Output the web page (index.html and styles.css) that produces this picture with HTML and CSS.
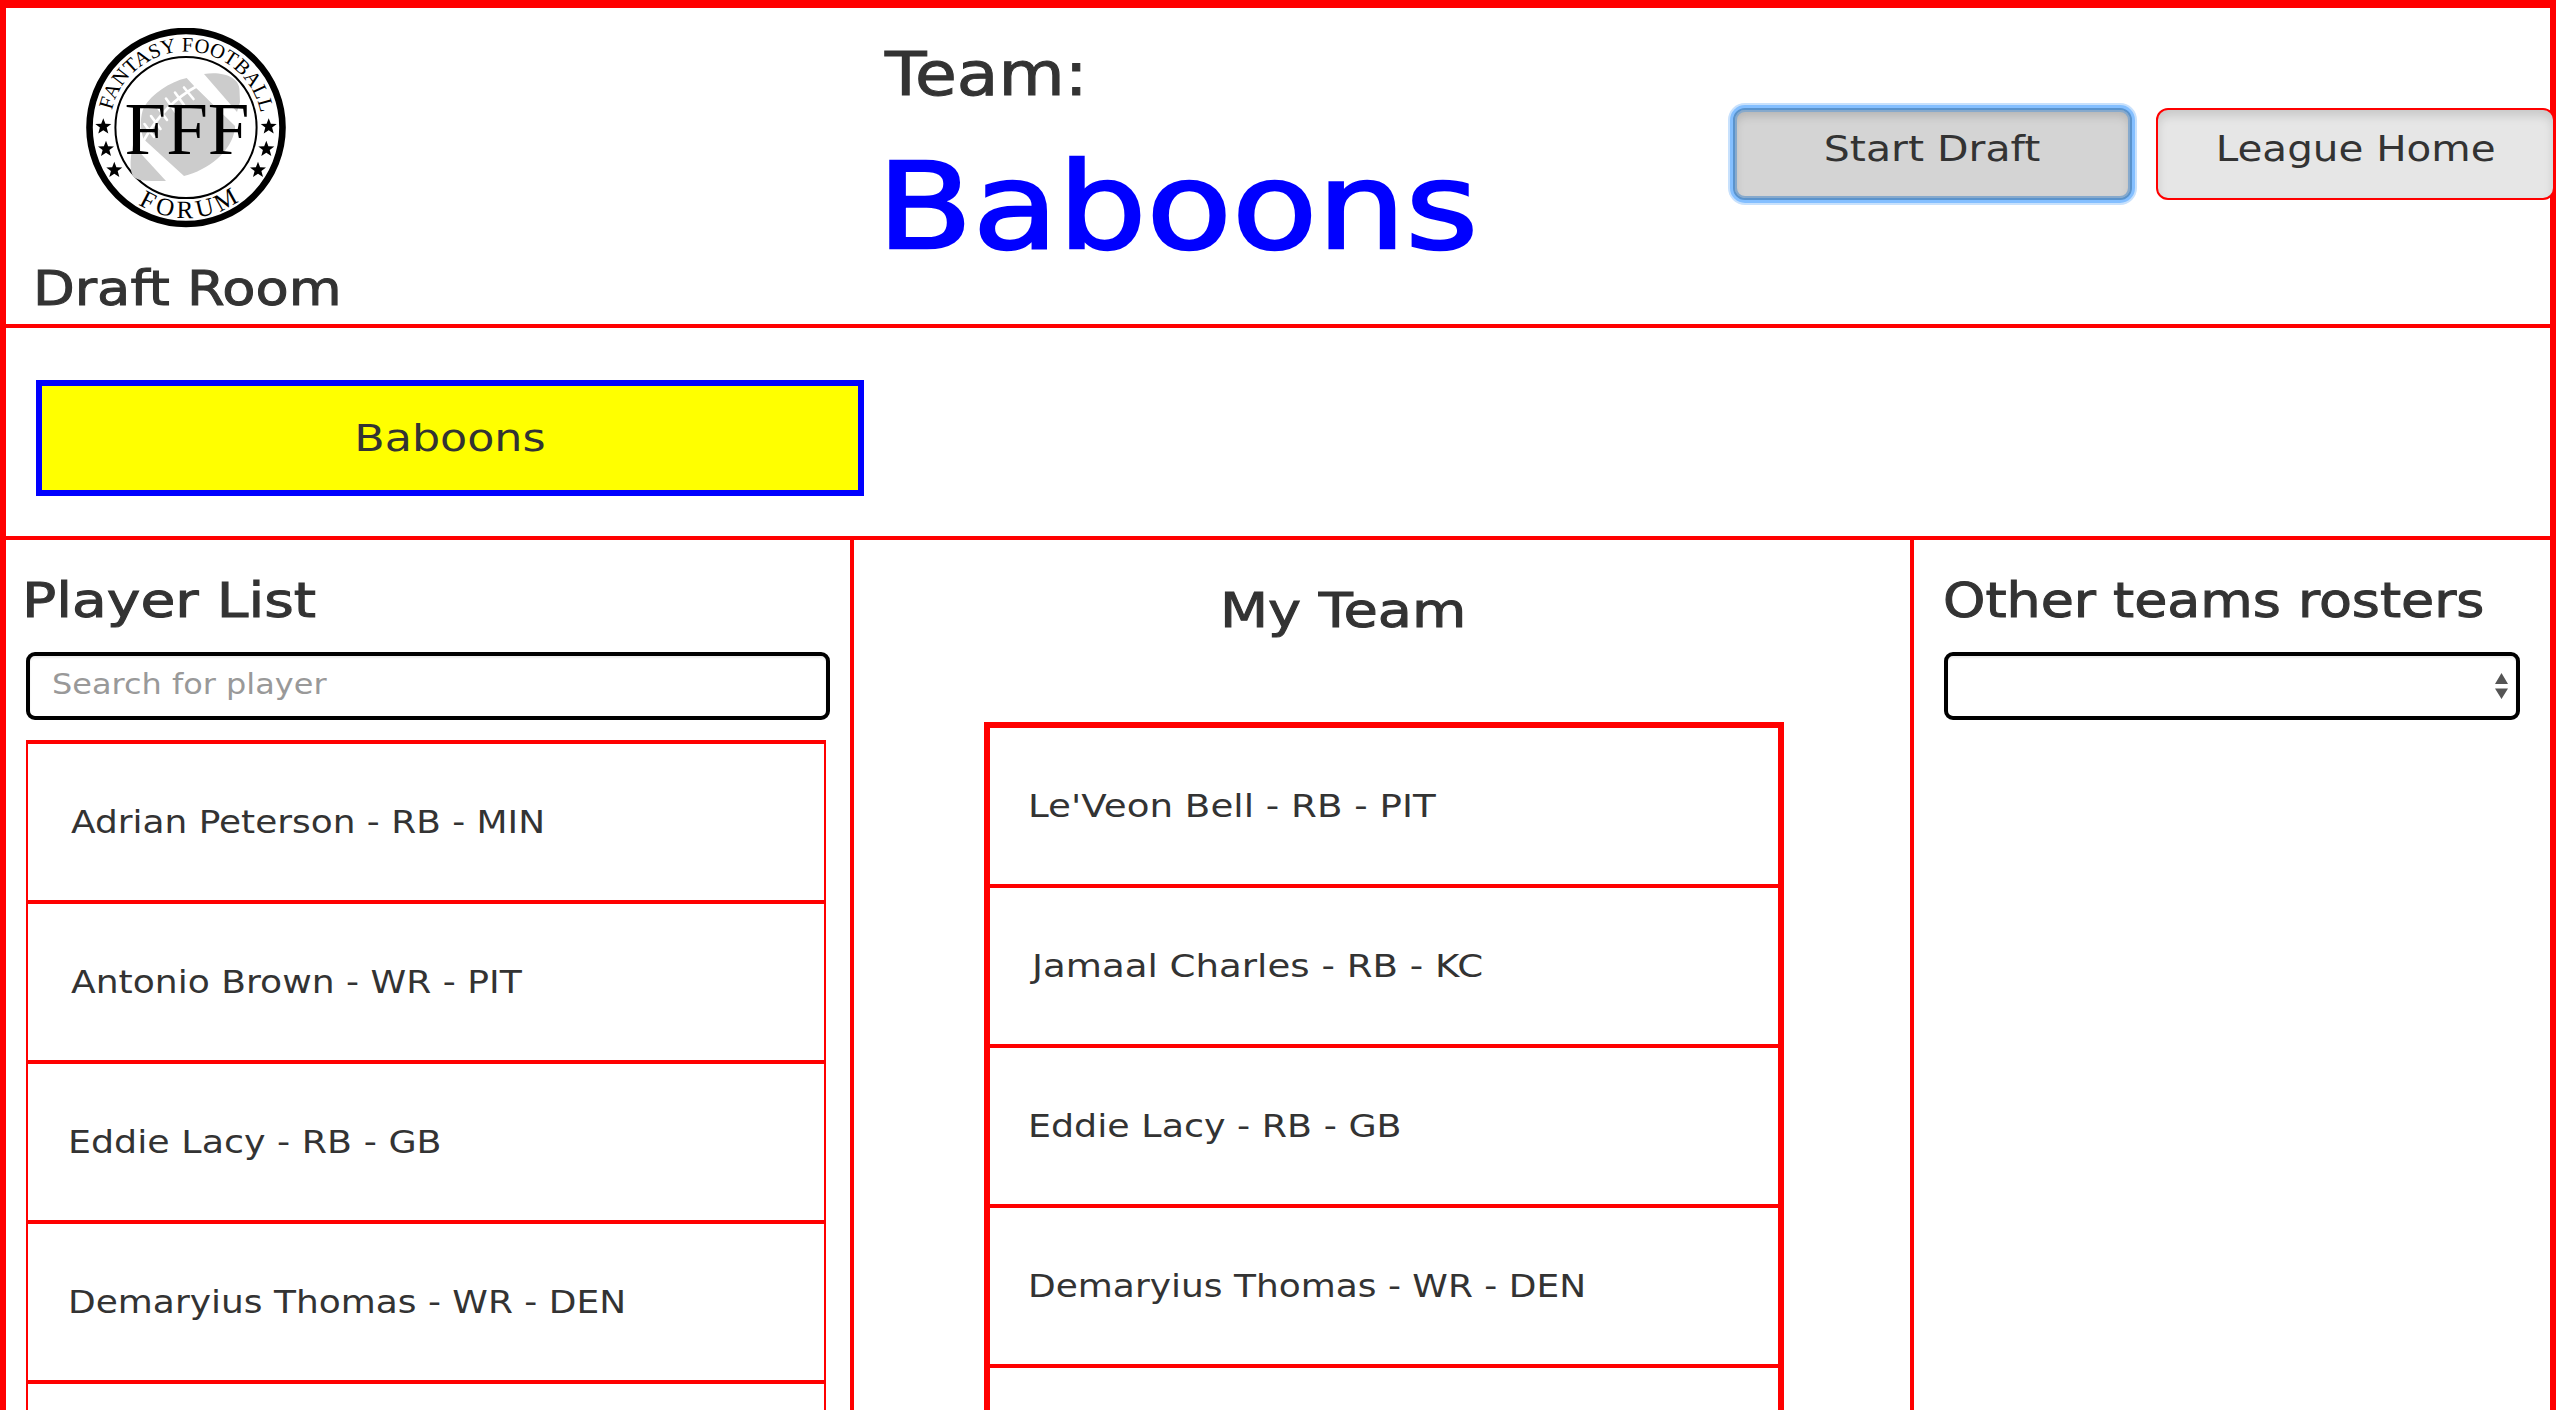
FILE: index.html
```
<!DOCTYPE html>
<html lang="en">
<head>
<meta charset="utf-8">
<title>Draft Room</title>
<link rel="stylesheet" href="styles.css">
</head>
<body>
<div class="frame">
  <header class="header">
    <div class="brand">
      <svg class="logo" viewBox="0 0 200 200" role="img" aria-label="Fantasy Football Forum">
        <defs>
          <path id="ring-top" d="M24 99.5 A76 76 0 0 1 176 99.5"/>
          <path id="ring-bottom" d="M9.5 99.5 A90.5 90.5 0 0 0 190.5 99.5"/>
          <path id="star" d="M0 -8.2 L2.1 -2.8 L8 -2.6 L3.4 1.1 L5 7 L0 3.7 L-5 7 L-3.4 1.1 L-8 -2.6 L-2.1 -2.8 Z"/>
        </defs>
        <circle cx="100" cy="99.5" r="96.5" fill="#fff" stroke="#000" stroke-width="6.6"/>
        <circle cx="100" cy="99.5" r="70.6" fill="none" stroke="#000" stroke-width="2"/>
        <g fill="#ccc">
          <path d="M100.7 50 C83 54 66 66 58 79 C54 88 54 100 57.5 111 L98 148 C122 142 146 124 149 100 L109 59 Z"/>
          <path d="M118 46 C138 43 153.500 50 153.500 62 L154 74 L151 84 Z"/>
          <path d="M47 117 C44 130 44 140 46 146 C49 154 62 153 80 153 Z"/>
          <path d="M109 59 L124 77 L149 103 L149 98 Z"/>
        </g>
        <path fill="none" stroke="#fff" stroke-width="2.600" stroke-linecap="round" d="M112 57.500 Q78 76 58 112 M98 59.500 L107.500 71 M89 64.500 L98 77 M80 70.500 L89.500 84 M71.500 79 L81 92 M65 88 L74.500 101 M58.500 96 L68 109"/>
        <g class="logo-text">
          <text x="38.500" y="126.300" font-size="75" textLength="125">FFF</text>
          <text font-size="20.500"><textPath href="#ring-top" startOffset="17.500" textLength="206">FANTASY FOOTBALL</textPath></text>
          <text font-size="25"><textPath href="#ring-bottom" startOffset="91.500" textLength="107">FORUM</textPath></text>
        </g>
        <use href="#star" x="17.300" y="98.500"/><use href="#star" x="20" y="121"/><use href="#star" x="28.300" y="142"/>
        <use href="#star" x="182.700" y="98.500"/><use href="#star" x="180.300" y="121"/><use href="#star" x="172" y="142"/>
      </svg>
      <h2 class="title room"><span class="wide">Draft Room</span></h2>
    </div>
    <div class="team">
      <h1 class="team-label"><span class="wide">Team:</span></h1>
      <div class="team-name"><span class="wide">Baboons</span></div>
    </div>
    <div class="actions">
      <button class="btn btn-start"><span class="wide">Start Draft</span></button>
      <button class="btn btn-home"><span class="wide">League Home</span></button>
    </div>
  </header>
  <section class="order"><div class="pick"><span class="wide">Baboons</span></div></section>
  <main class="columns">
    <section class="players">
      <h2 class="title title-players"><span class="wide">Player List</span></h2>
      <div class="field"><span class="wide">Search for player</span></div>
      <ul class="list">
        <li class="peterson"><span class="wide">Adrian Peterson - RB - MIN</span></li>
        <li class="brown"><span class="wide">Antonio Brown - WR - PIT</span></li>
        <li class="lacy"><span class="wide">Eddie Lacy - RB - GB</span></li>
        <li class="thomas"><span class="wide">Demaryius Thomas - WR - DEN</span></li>
        <li></li>
      </ul>
    </section>
    <section class="mine">
      <h2 class="title title-mine"><span class="wide">My Team</span></h2>
      <ul class="roster">
        <li class="bell"><span class="wide">Le'Veon Bell - RB - PIT</span></li>
        <li class="charles"><span class="wide">Jamaal Charles - RB - KC</span></li>
        <li class="lacy"><span class="wide">Eddie Lacy - RB - GB</span></li>
        <li class="thomas"><span class="wide">Demaryius Thomas - WR - DEN</span></li>
        <li></li>
      </ul>
    </section>
    <section class="others">
      <h2 class="title title-others"><span class="wide">Other teams rosters</span></h2>
      <div class="field select">
        <svg class="arrows" viewBox="0 0 13 26"><path d="M6.500 0 L13 11 H0 Z M0 15.500 H13 L6.500 26 Z"/></svg>
      </div>
    </section>
  </main>
</div>
</body>
</html>
```
FILE: styles.css
```
* { box-sizing: border-box; }
body { margin: 0; background: #fff; color: #333; font-family: "DejaVu Sans", sans-serif; overflow: hidden; }
h1, h2, ul { margin: 0; padding: 0; font-weight: 400; }
ul { list-style: none; }
.frame { width: 2556px; height: 1410px; border: solid red; border-width: 8px 6px 0; display: flex; flex-direction: column; }

/* Extended lettering: each label sets its own --w stretch */
.wide { display: inline-block; transform: scaleX(var(--w, 1.13)); transform-origin: left center; white-space: nowrap; }

.header { height: 320px; flex: none; border-bottom: 4px solid red; display: flex; }
.brand { flex: none; width: 877px; padding: 20px 0 0 30px; }
.logo { display: block; width: 200px; height: 200px; margin-left: 50px; }
.logo-text { font-family: "Liberation Serif", serif; fill: #000; }
.title { font-size: 48px; line-height: 52px; -webkit-text-stroke: 1px #333; }
.room { --w: 1.131; margin: 34px 0 0 -3px; }
.team { flex: none; width: 850px; padding-top: 33px; }
.team-label { --w: 1.134; margin-left: 2px; font-size: 60px; line-height: 66px; -webkit-text-stroke: 1px #333; }
.team-name { --w: 1.162; margin: 34px 0 0 -6px; font-size: 120px; line-height: 132px; color: #00f; -webkit-text-stroke: 2.5px #00f; }
.actions { flex: none; display: flex; gap: 24px; padding-top: 100px; }
.btn { --w: 1.123; width: 399px; height: 92px; padding: 14px 0 0; border: 2px solid red; border-radius: 12px; font: 36px/50px "DejaVu Sans", sans-serif; color: #333; display: flex; justify-content: center; background: #e6e6e6; box-shadow: inset 0 6px 10px rgba(0, 0, 0, .125); }
.btn-start { --w: 1.139; background: #d4d4d4; border-color: #5a93cc; box-shadow: 0 0 0 3px #84bfff, 0 0 0 5px #c8e1fc, inset 0 0 0 2px #86a9cc, inset 0 6px 10px rgba(0, 0, 0, .15); }
.btn .wide, .pick .wide { transform-origin: center; }

.order { height: 212px; flex: none; border-bottom: 4px solid red; padding: 52px 0 0 30px; }
.pick { --w: 1.168; width: 828px; height: 116px; border: 6px solid #00f; background: #ff0; font-size: 38px; line-height: 105px; text-align: center; }

.columns { flex: 1; min-height: 0; display: flex; }
.players { width: 848px; border-right: 4px solid red; padding: 34px 20px 0; overflow: hidden; }
.mine { width: 1056px; padding: 44px 0 0 4px; overflow: hidden; display: flex; flex-direction: column; align-items: center; }
.others { flex: 1; border-left: 4px solid red; padding: 34px 30px 0; }
.title-players { --w: 1.183; margin-left: -4px; }
.title-mine { --w: 1.162; align-self: flex-start; margin-left: 362px; }
.title-others { --w: 1.122; margin-left: -1px; }
.field { height: 68px; margin-top: 26px; border: 4px solid #000; border-radius: 9px; box-shadow: inset 0 2px 2px rgba(0, 0, 0, .075); }
.players .field { --w: 1.102; width: 804px; padding-left: 22px; font-size: 29px; line-height: 56px; color: #999; }
.list { width: 800px; margin-top: 20px; border: solid red; border-width: 4px 2px 0; }
li { height: 160px; border-bottom: 4px solid red; padding-left: 39.6px; font-size: 32px; line-height: 157px; }
.peterson { --w: 1.122; padding-left: 43px; }
.brown { --w: 1.128; padding-left: 43px; }
.lacy { --w: 1.138; }
.thomas { --w: 1.124; }
.roster { width: 800px; margin-top: 86px; border: 6px solid red; }
.roster li { padding-left: 37.6px; }
.bell { --w: 1.163; }
.roster .charles { --w: 1.161; padding-left: 42px; }
.select { display: flex; align-items: center; justify-content: flex-end; padding-right: 8px; }
.arrows { width: 13px; height: 26px; fill: #555; }
```
